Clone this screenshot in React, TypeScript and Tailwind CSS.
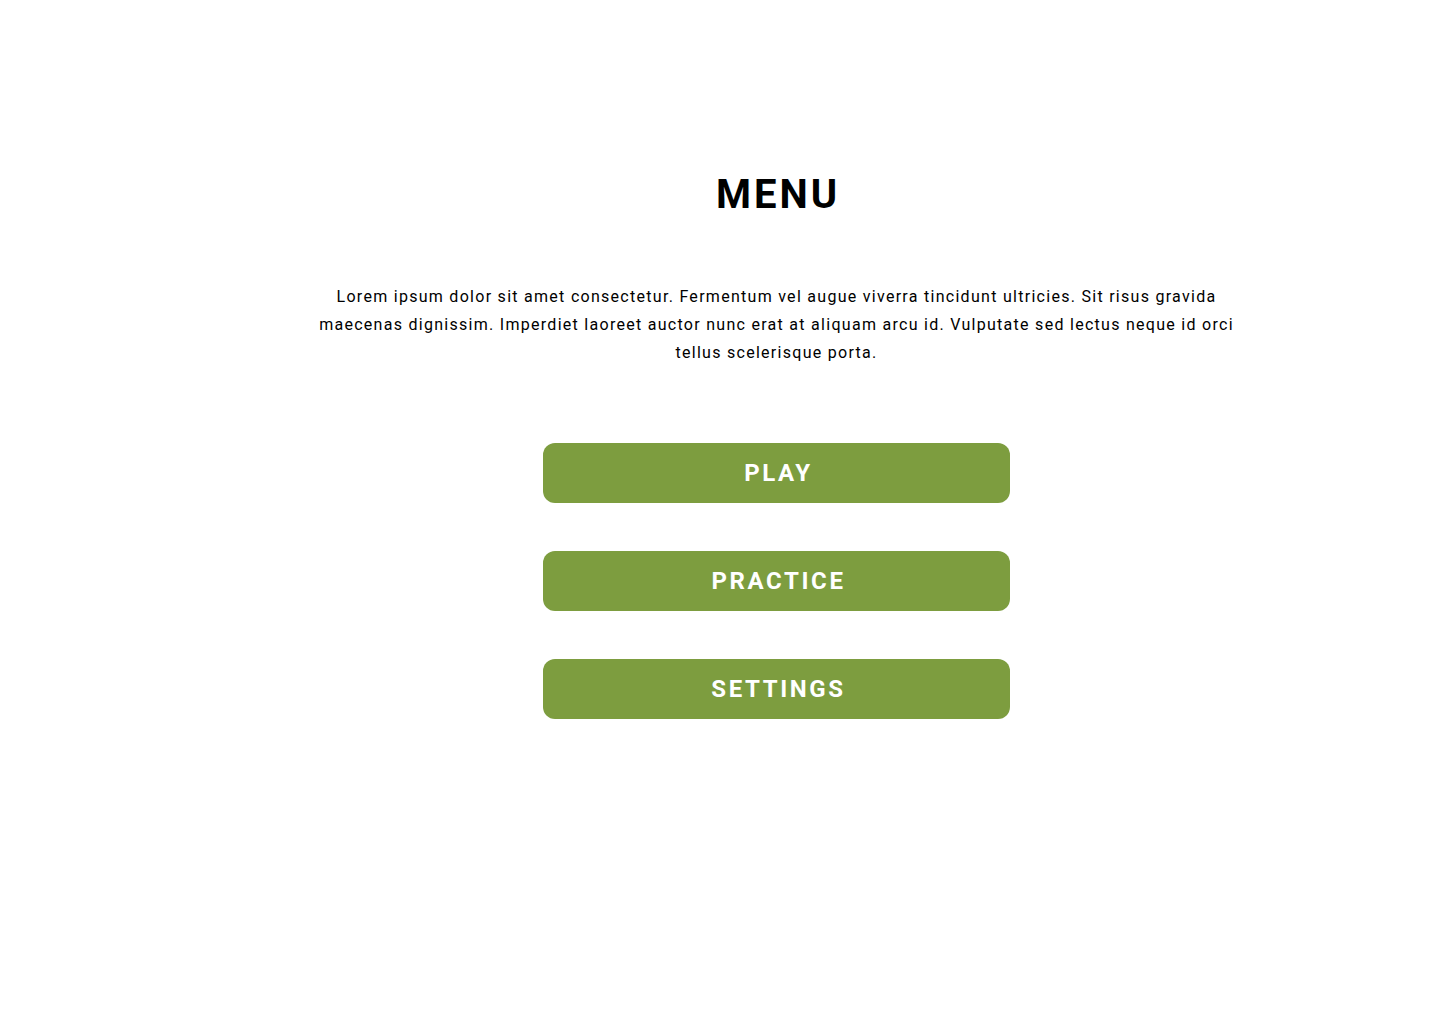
export default function App() {
  const items = ['PLAY', 'PRACTICE', 'SETTINGS']
  return (
    <main className="min-h-screen bg-white pl-[113px] font-['Roboto',sans-serif] text-black">
      <div className="flex flex-col items-center pt-[167px]">
        <h1 className="pl-[3px] text-[40px] font-bold leading-[56px] tracking-[3px]">MENU</h1>
        <p className="mt-[60px] max-w-[930px] text-center text-[16px] leading-[28px] tracking-[1.28px]">
          Lorem ipsum dolor sit amet consectetur. Fermentum vel augue viverra tincidunt ultricies. Sit risus gravida
          maecenas dignissim. Imperdiet laoreet auctor nunc erat at aliquam arcu id. Vulputate sed lectus neque id orci
          tellus scelerisque porta.
        </p>
        <div className="mt-[76px] flex flex-col gap-12">
          {items.map((label) => (
            <button
              key={label}
              className="h-[60px] w-[467px] rounded-xl bg-[#7d9d3f] pl-[4px] text-[24px] font-bold tracking-[2.6px] text-white"
            >
              {label}
            </button>
          ))}
        </div>
      </div>
    </main>
  )
}
